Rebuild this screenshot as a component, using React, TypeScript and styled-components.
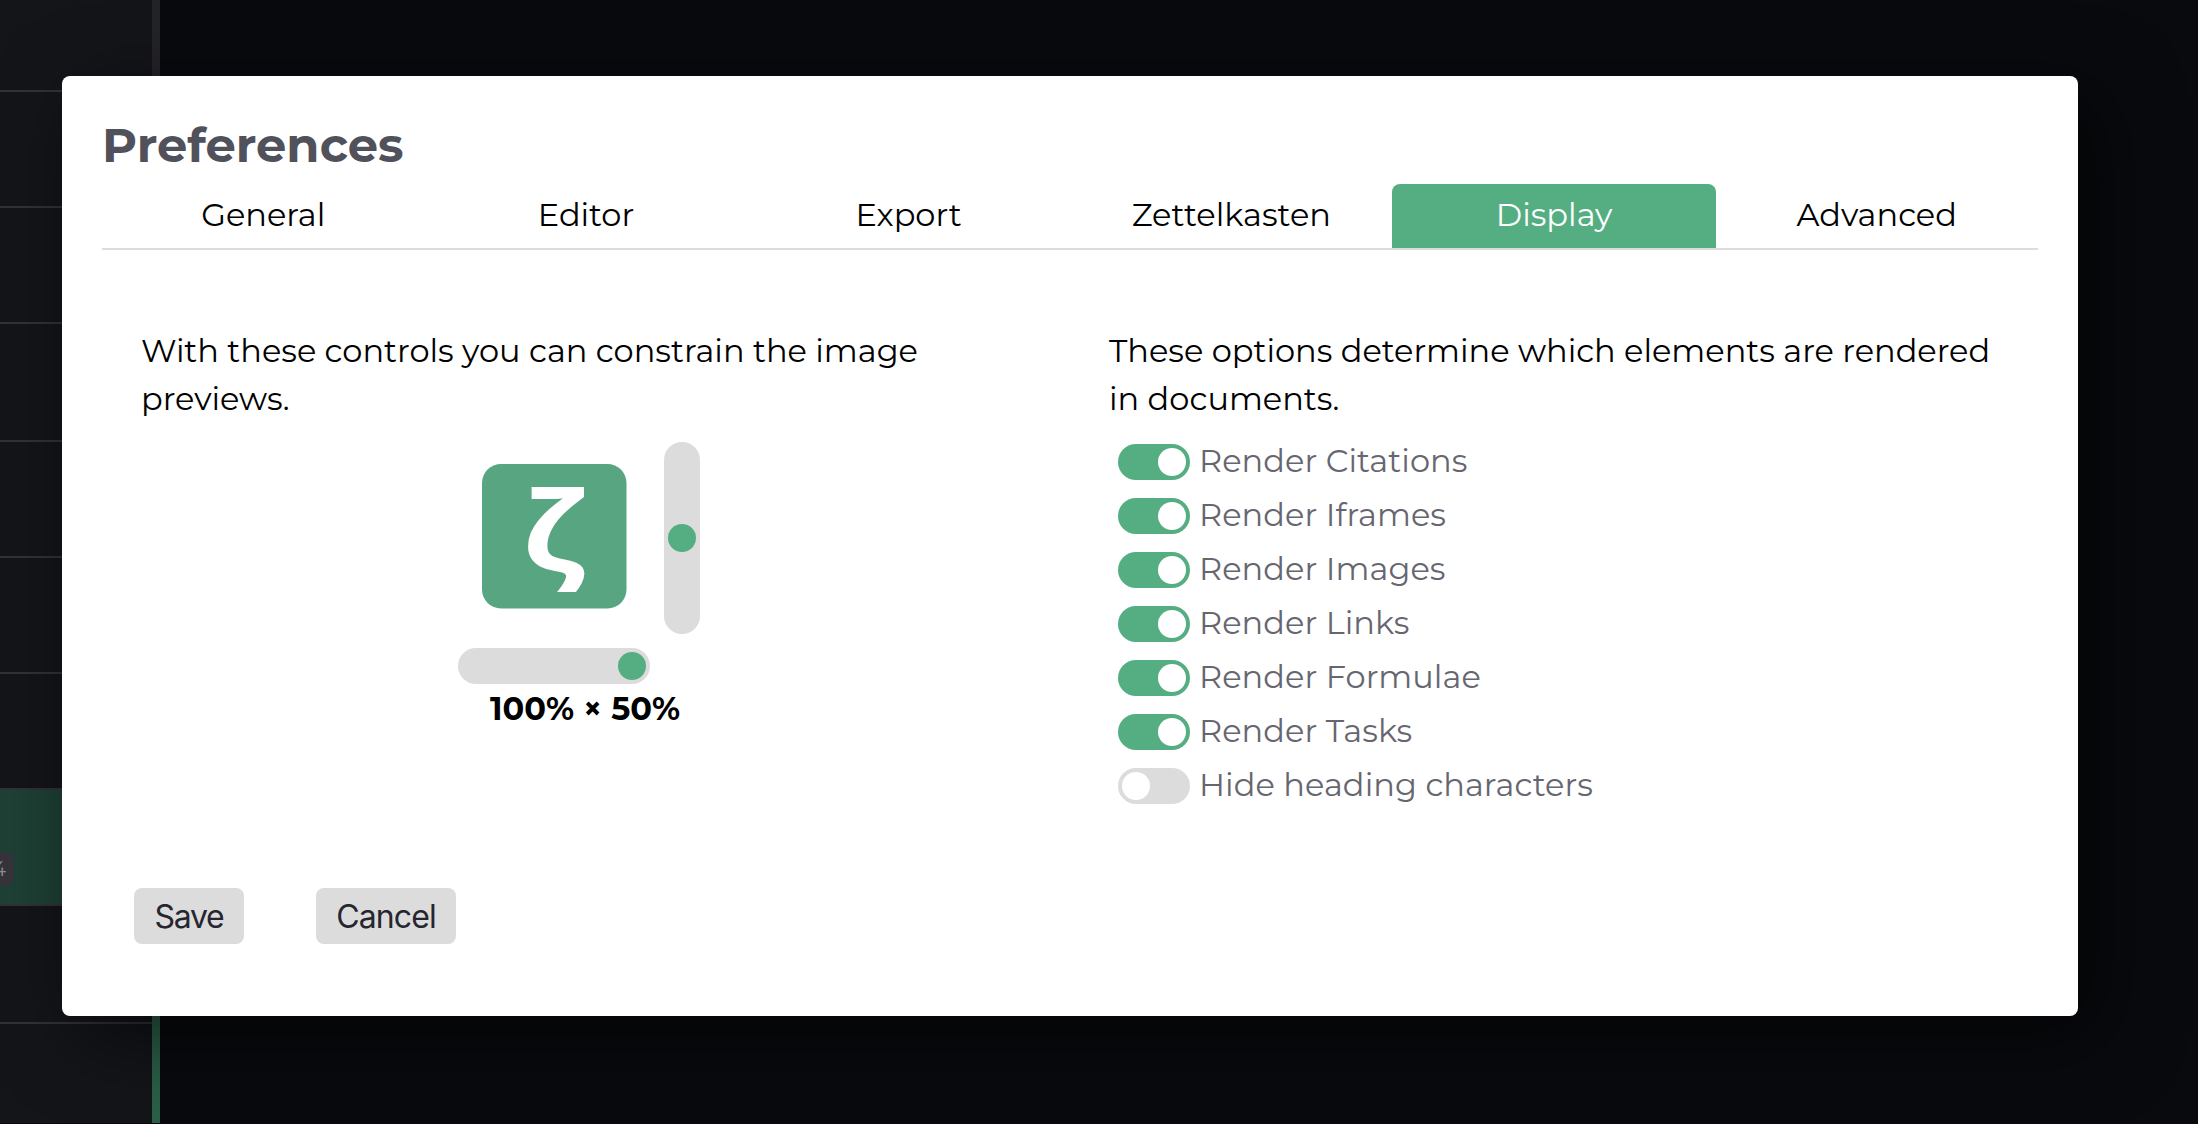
import React, { useState } from "react";
import styled, { createGlobalStyle } from "styled-components";

const colors = {
  accent: "#54ae82",
  logo: "#58a582",
  control: "#dcdcdc",
  heading: "#51515b",
  label: "#666670",
};

const GlobalStyle = createGlobalStyle`
  *, *::before, *::after { box-sizing: border-box; }
  html, body { margin: 0; height: 100%; overflow: hidden; background: #090a0e; }
  button { font: inherit; border: 0; margin: 0; cursor: pointer; }
`;

const Window = styled.div`
  position: relative;
  display: flex;
  width: 2198px;
  height: 1124px;
  overflow: hidden;
  border-bottom: 1px solid #0e040b;
  background: #090a0e;
  font-family: Montserrat, Inter, sans-serif;
  font-size: 32px;
  line-height: 39px;
  color: #000;
`;

const FileList = styled.aside`
  flex: none;
  width: 152px;
  background: #141519;
`;

const FileItem = styled.div<{ $height: number; $selected?: boolean }>`
  display: flex;
  align-items: flex-end;
  height: ${(p) => p.$height}px;
  padding-bottom: 18px;
  border-bottom: 2px solid #323236;
  background: ${(p) => (p.$selected ? "#1e4035" : "transparent")};
`;

const FileBadge = styled.span`
  display: flex;
  justify-content: flex-end;
  width: 14px;
  height: 34px;
  padding: 5px 8px 0 0;
  border-radius: 0 8px 8px 0;
  background: #35343a;
  color: #8c8c8c;
  font-size: 20px;
  line-height: 24px;
`;

const Divider = styled.div`
  flex: none;
  width: 8px;
  background: linear-gradient(#242328 50%, #2b5f47 50%);
`;

const Dialog = styled.section`
  position: absolute;
  left: 62px;
  top: 76px;
  display: flex;
  flex-direction: column;
  width: 2016px;
  height: 940px;
  padding: 38px 40px 72px;
  border-radius: 8px;
  background: #fff;
  box-shadow: 20px 20px 80px rgba(0, 0, 0, 0.6);
`;

const Title = styled.h1`
  margin: 0;
  height: 70px;
  color: ${colors.heading};
  font-size: 48px;
  font-weight: 700;
  line-height: 62px;
`;

const TabBar = styled.nav`
  display: grid;
  grid-template-columns: repeat(6, 1fr);
  border-bottom: 2px solid ${colors.control};
`;

const Tab = styled.button<{ $active: boolean }>`
  height: 64px;
  margin: 0 -0.7px;
  padding: 0 0 3px;
  border-radius: 8px 8px 0 0;
  background: ${(p) => (p.$active ? colors.accent : "transparent")};
  color: ${(p) => (p.$active ? "#fff" : "#000")};
  text-align: center;
`;

const Columns = styled.div`
  display: grid;
  grid-template-columns: 1fr 1fr;
  padding-top: 77px;
`;

const Column = styled.div`
  padding: 0 38px 0 39px;
`;

const Text = styled.p`
  margin: 0;
  line-height: 48px;
`;

const Preview = styled.div`
  display: grid;
  grid-template-columns: 192px 36px;
  gap: 14px;
  padding: 19px 0 0 317px;
`;

const LogoCell = styled.div`
  display: flex;
  align-items: center;
  justify-content: center;
  height: 192px;
  padding-bottom: 4px;
`;

const Slider = styled.div<{ $vertical?: boolean }>`
  display: flex;
  align-items: center;
  justify-content: ${(p) => (p.$vertical ? "center" : "flex-end")};
  width: ${(p) => (p.$vertical ? 36 : 192)}px;
  height: ${(p) => (p.$vertical ? 192 : 36)}px;
  padding: 4px;
  border-radius: 18px;
  background: ${colors.control};
`;

const Knob = styled.span<{ $color: string }>`
  width: 28px;
  height: 28px;
  border-radius: 50%;
  background: ${(p) => p.$color};
`;

const PreviewSize = styled.div`
  width: 254px;
  margin: 5px 0 0 317px;
  font-weight: 700;
  text-align: center;
  white-space: nowrap;
`;

const Options = styled.div`
  padding: 12px 0 0 9px;
`;

const Option = styled.label`
  display: flex;
  align-items: center;
  gap: 9px;
  height: 54px;
  color: ${colors.label};
  letter-spacing: 0.06px;
`;

const Switch = styled.span<{ $on: boolean }>`
  display: flex;
  align-items: center;
  justify-content: ${(p) => (p.$on ? "flex-end" : "flex-start")};
  width: 72px;
  height: 36px;
  padding: 4px;
  border-radius: 18px;
  background: ${(p) => (p.$on ? colors.accent : colors.control)};
`;

const OptionName = styled.span`
  padding-bottom: 3px;
`;

const Footer = styled.footer`
  display: flex;
  gap: 72px;
  margin-top: auto;
  padding-left: 32px;
`;

const Button = styled.button<{ $width: number; $tracking: number }>`
  width: ${(p) => p.$width}px;
  height: 56px;
  padding: 0;
  border-radius: 8px;
  background: ${colors.control};
  color: #262631;
  font-family: Inter, sans-serif;
  font-size: 32px;
  line-height: 57px;
  letter-spacing: ${(p) => p.$tracking}px;
`;

const tabs = ["General", "Editor", "Export", "Zettelkasten", "Display", "Advanced"];

const fileHeights = [92, 116, 116, 118, 116, 116, 116];

const initialOptions = [
  { name: "Render Citations", on: true },
  { name: "Render Iframes", on: true },
  { name: "Render Images", on: true },
  { name: "Render Links", on: true },
  { name: "Render Formulae", on: true },
  { name: "Render Tasks", on: true },
  { name: "Hide heading characters", on: false },
];

function Logo() {
  return (
    <svg width="145" height="145" viewBox="0 0 145 145">
      <rect width="144.5" height="144.5" rx="19" fill={colors.logo} />
      <text
        transform="translate(40.4 107.6) scale(1.13 1)"
        fontFamily="Open Sans, Noto Sans, sans-serif"
        fontSize="111"
        fontWeight="700"
        fill="#fff"
      >
        ζ
      </text>
    </svg>
  );
}

export default function App() {
  const [active, setActive] = useState("Display");
  const [options, setOptions] = useState(initialOptions);
  const toggle = (name: string) =>
    setOptions((list) => list.map((o) => (o.name === name ? { ...o, on: !o.on } : o)));

  return (
    <Window>
      <GlobalStyle />
      <FileList>
        {fileHeights.map((height, i) => (
          <FileItem key={i} $height={height} />
        ))}
        <FileItem $height={116} $selected>
          <FileBadge>4</FileBadge>
        </FileItem>
        <FileItem $height={118} />
      </FileList>
      <Divider />
      <Dialog>
        <Title>Preferences</Title>
        <TabBar>
          {tabs.map((tab) => (
            <Tab key={tab} $active={tab === active} onClick={() => setActive(tab)}>
              {tab}
            </Tab>
          ))}
        </TabBar>
        <Columns>
          <Column>
            <Text>With these controls you can constrain the image previews.</Text>
            <Preview>
              <LogoCell>
                <Logo />
              </LogoCell>
              <Slider $vertical>
                <Knob $color={colors.accent} />
              </Slider>
              <Slider>
                <Knob $color={colors.accent} />
              </Slider>
            </Preview>
            <PreviewSize>100% × 50%</PreviewSize>
          </Column>
          <Column>
            <Text>These options determine which elements are rendered in documents.</Text>
            <Options>
              {options.map((o) => (
                <Option key={o.name} onClick={() => toggle(o.name)}>
                  <Switch $on={o.on}>
                    <Knob $color="#fff" />
                  </Switch>
                  <OptionName>{o.name}</OptionName>
                </Option>
              ))}
            </Options>
          </Column>
        </Columns>
        <Footer>
          <Button $width={110} $tracking={-1.3}>Save</Button>
          <Button $width={140} $tracking={-0.9}>Cancel</Button>
        </Footer>
      </Dialog>
    </Window>
  );
}
